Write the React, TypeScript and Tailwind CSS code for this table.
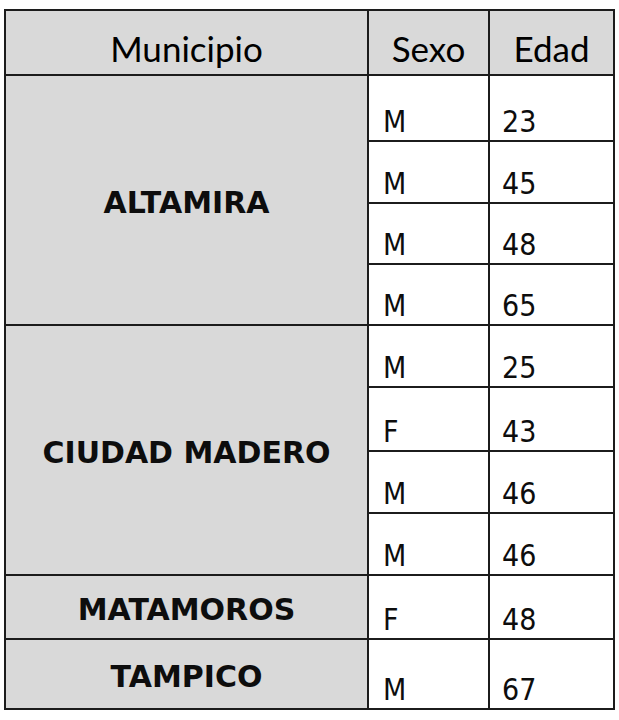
import React from 'react';

type Group = { name: string; rows: { sexo: string; edad: string; h: string }[] };

// row heights follow the screenshot (px, incl. bottom border)
const groups: Group[] = [
  {
    name: 'ALTAMIRA',
    rows: [
      { sexo: 'M', edad: '23', h: 'h-[66px]' },
      { sexo: 'M', edad: '45', h: 'h-[62px]' },
      { sexo: 'M', edad: '48', h: 'h-[61px]' },
      { sexo: 'M', edad: '65', h: 'h-[61px]' },
    ],
  },
  {
    name: 'CIUDAD MADERO',
    rows: [
      { sexo: 'M', edad: '25', h: 'h-[62px]' },
      { sexo: 'F', edad: '43', h: 'h-[64px]' },
      { sexo: 'M', edad: '46', h: 'h-[62px]' },
      { sexo: 'M', edad: '46', h: 'h-[62px]' },
    ],
  },
  { name: 'MATAMOROS', rows: [{ sexo: 'F', edad: '48', h: 'h-[64px]' }] },
  { name: 'TAMPICO', rows: [{ sexo: 'M', edad: '67', h: 'h-[70px]' }] },
];

const headFont = "font-['Lato','Liberation_Sans',sans-serif]";
const cellFont = "font-['DejaVu_Sans_Condensed','DejaVu_Sans',sans-serif]";
const boldFont = "font-['DejaVu_Sans','Verdana',sans-serif]";

const App: React.FC = () => {
  return (
    <div className="w-[619px] h-[720px] bg-white pt-[9px] pl-[4px]">
      <div className="w-[611px] border-l-2 border-t-2 border-[#1c1c1c] text-[#0d0d0d]">
        {/* Header */}
        <div className={`grid grid-cols-[363px_121px_125px] h-[65px] bg-[#d9d9d9] ${headFont} text-[35px] text-black`}>
          <div className="border-r-2 border-b-2 border-[#1c1c1c] flex items-end justify-center">Municipio</div>
          <div className="border-r-2 border-b-2 border-[#1c1c1c] flex items-end justify-center">Sexo</div>
          <div className="border-r-2 border-b-2 border-[#1c1c1c] flex items-end justify-center">Edad</div>
        </div>

        {groups.map((g) => (
          <div key={g.name} className="grid grid-cols-[363px_246px]">
            <div className={`bg-[#d9d9d9] border-r-2 border-b-2 border-[#1c1c1c] flex items-center justify-center pt-[4px] ${boldFont} font-bold text-[30px]`}>
              {g.name}
            </div>
            <div className="flex flex-col">
              {g.rows.map((r, i) => (
                <div key={i} className={`grid grid-cols-[121px_125px] ${r.h} bg-white ${cellFont} text-[30px] leading-none`}>
                  <div className="border-r-2 border-b-2 border-[#1c1c1c] flex items-end pl-[14px] pb-[3px]">{r.sexo}</div>
                  <div className="border-r-2 border-b-2 border-[#1c1c1c] flex items-end pl-[12px] pb-[3px]">{r.edad}</div>
                </div>
              ))}
            </div>
          </div>
        ))}
      </div>
    </div>
  );
};

export default App;
